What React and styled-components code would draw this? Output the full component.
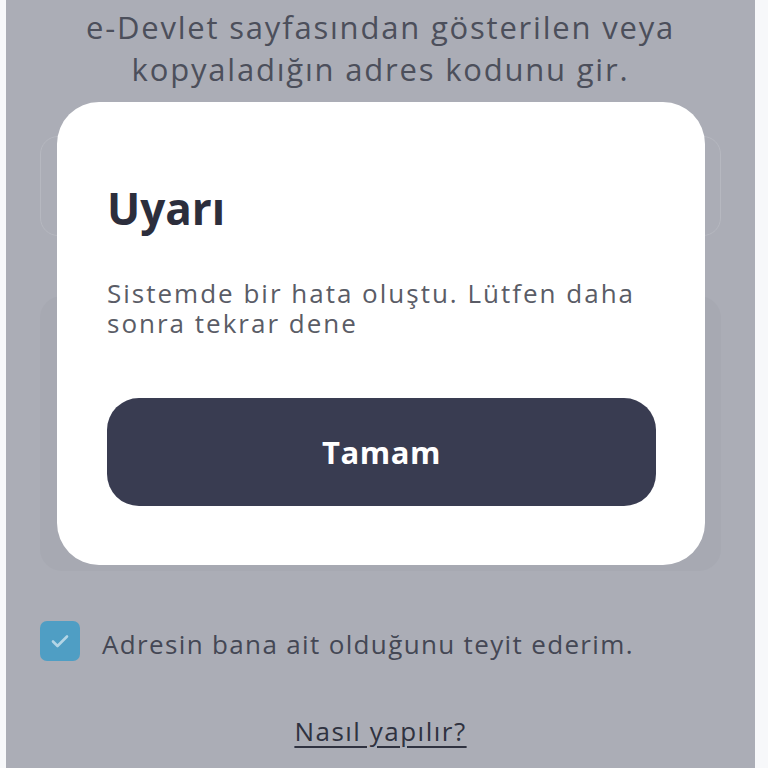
import styled, { createGlobalStyle } from 'styled-components';

const GlobalStyle = createGlobalStyle`
    html, body {
        margin: 0;
        padding: 0;
        background: #f7f8fa;
    }
    * {
        box-sizing: border-box;
    }
`

const Page = styled.div`
    display: flex;
    width: 768px;
    height: 768px;
    overflow: hidden;
    background: #f7f8fa;
    font-family: "Open Sans", "Noto Sans", sans-serif;
`

const Screen = styled.div`
    position: relative;
    margin-left: 6px;
    width: 749px;
    height: 100%;
    background: #abadb6;
    display: flex;
    flex-direction: column;
    padding: 6px 34px 0 34px;
`

const Intro = styled.p`
    margin: 0;
    text-align: center;
    font-size: 31px;
    line-height: 42px;
    color: #4c4f5b;
    letter-spacing: 1.8px;
`

const CodeInput = styled.div`
    margin-top: 46px;
    height: 100px;
    border: 1.5px solid #b6b8c0;
    border-radius: 18px;
`

const InfoCard = styled.div`
    margin-top: 60px;
    height: 275px;
    border-radius: 22px;
    background: #a7a9b2;
`

const ConfirmRow = styled.label`
    display: flex;
    align-items: center;
    gap: 22px;
    margin-top: 50px;
`

const Check = styled.span`
    width: 40px;
    height: 40px;
    border-radius: 7px;
    background: #4f9ec4;
    display: flex;
    align-items: center;
    justify-content: center;
`

const ConfirmText = styled.span`
    font-size: 26px;
    color: #444754;
    letter-spacing: 1.35px;
    transform: translateY(3px);
`

const HowLink = styled.a`
    align-self: center;
    margin-top: 52px;
    font-size: 26px;
    color: #2f3240;
    text-decoration: underline;
    text-underline-offset: 5px;
    letter-spacing: 1.5px;
`

const Modal = styled.div`
    position: absolute;
    left: 51px;
    top: 102px;
    width: 648px;
    height: 463px;
    background: #ffffff;
    border-radius: 42px;
    padding: 80px 49px 0 50px;
    display: flex;
    flex-direction: column;
`

const Title = styled.h2`
    margin: 0;
    font-size: 44px;
    line-height: 52px;
    font-weight: 700;
    color: #2c2e3c;
`

const Message = styled.p`
    margin: 44px 0 0 0;
    font-size: 26px;
    line-height: 30px;
    color: #5a5c66;
    letter-spacing: 2px;
`

const OkButton = styled.button`
    margin-top: 60px;
    height: 108px;
    border: none;
    border-radius: 32px;
    background: #393c51;
    color: #ffffff;
    font-family: inherit;
    font-size: 31px;
    font-weight: 700;
    letter-spacing: 0.5px;
`

export default function App() {
    return (
        <>
            <GlobalStyle />
            <Page>
                <Screen>
                    <Intro>e-Devlet sayfasından gösterilen veya<br />kopyaladığın adres kodunu gir.</Intro>
                    <CodeInput />
                    <InfoCard />
                    <ConfirmRow>
                        <Check>
                            <svg width="24" height="24" viewBox="0 0 24 24" fill="none" stroke="#b3d5e6" strokeWidth="2.6" strokeLinecap="round" strokeLinejoin="round">
                                <path d="M5 12.5l4.5 4.5L19 7.5" />
                            </svg>
                        </Check>
                        <ConfirmText>Adresin bana ait olduğunu teyit ederim.</ConfirmText>
                    </ConfirmRow>
                    <HowLink>Nasıl yapılır?</HowLink>

                    <Modal>
                        <Title>Uyarı</Title>
                        <Message>Sistemde bir hata oluştu. Lütfen daha<br />sonra tekrar dene</Message>
                        <OkButton>Tamam</OkButton>
                    </Modal>
                </Screen>
            </Page>
        </>
    )
}
